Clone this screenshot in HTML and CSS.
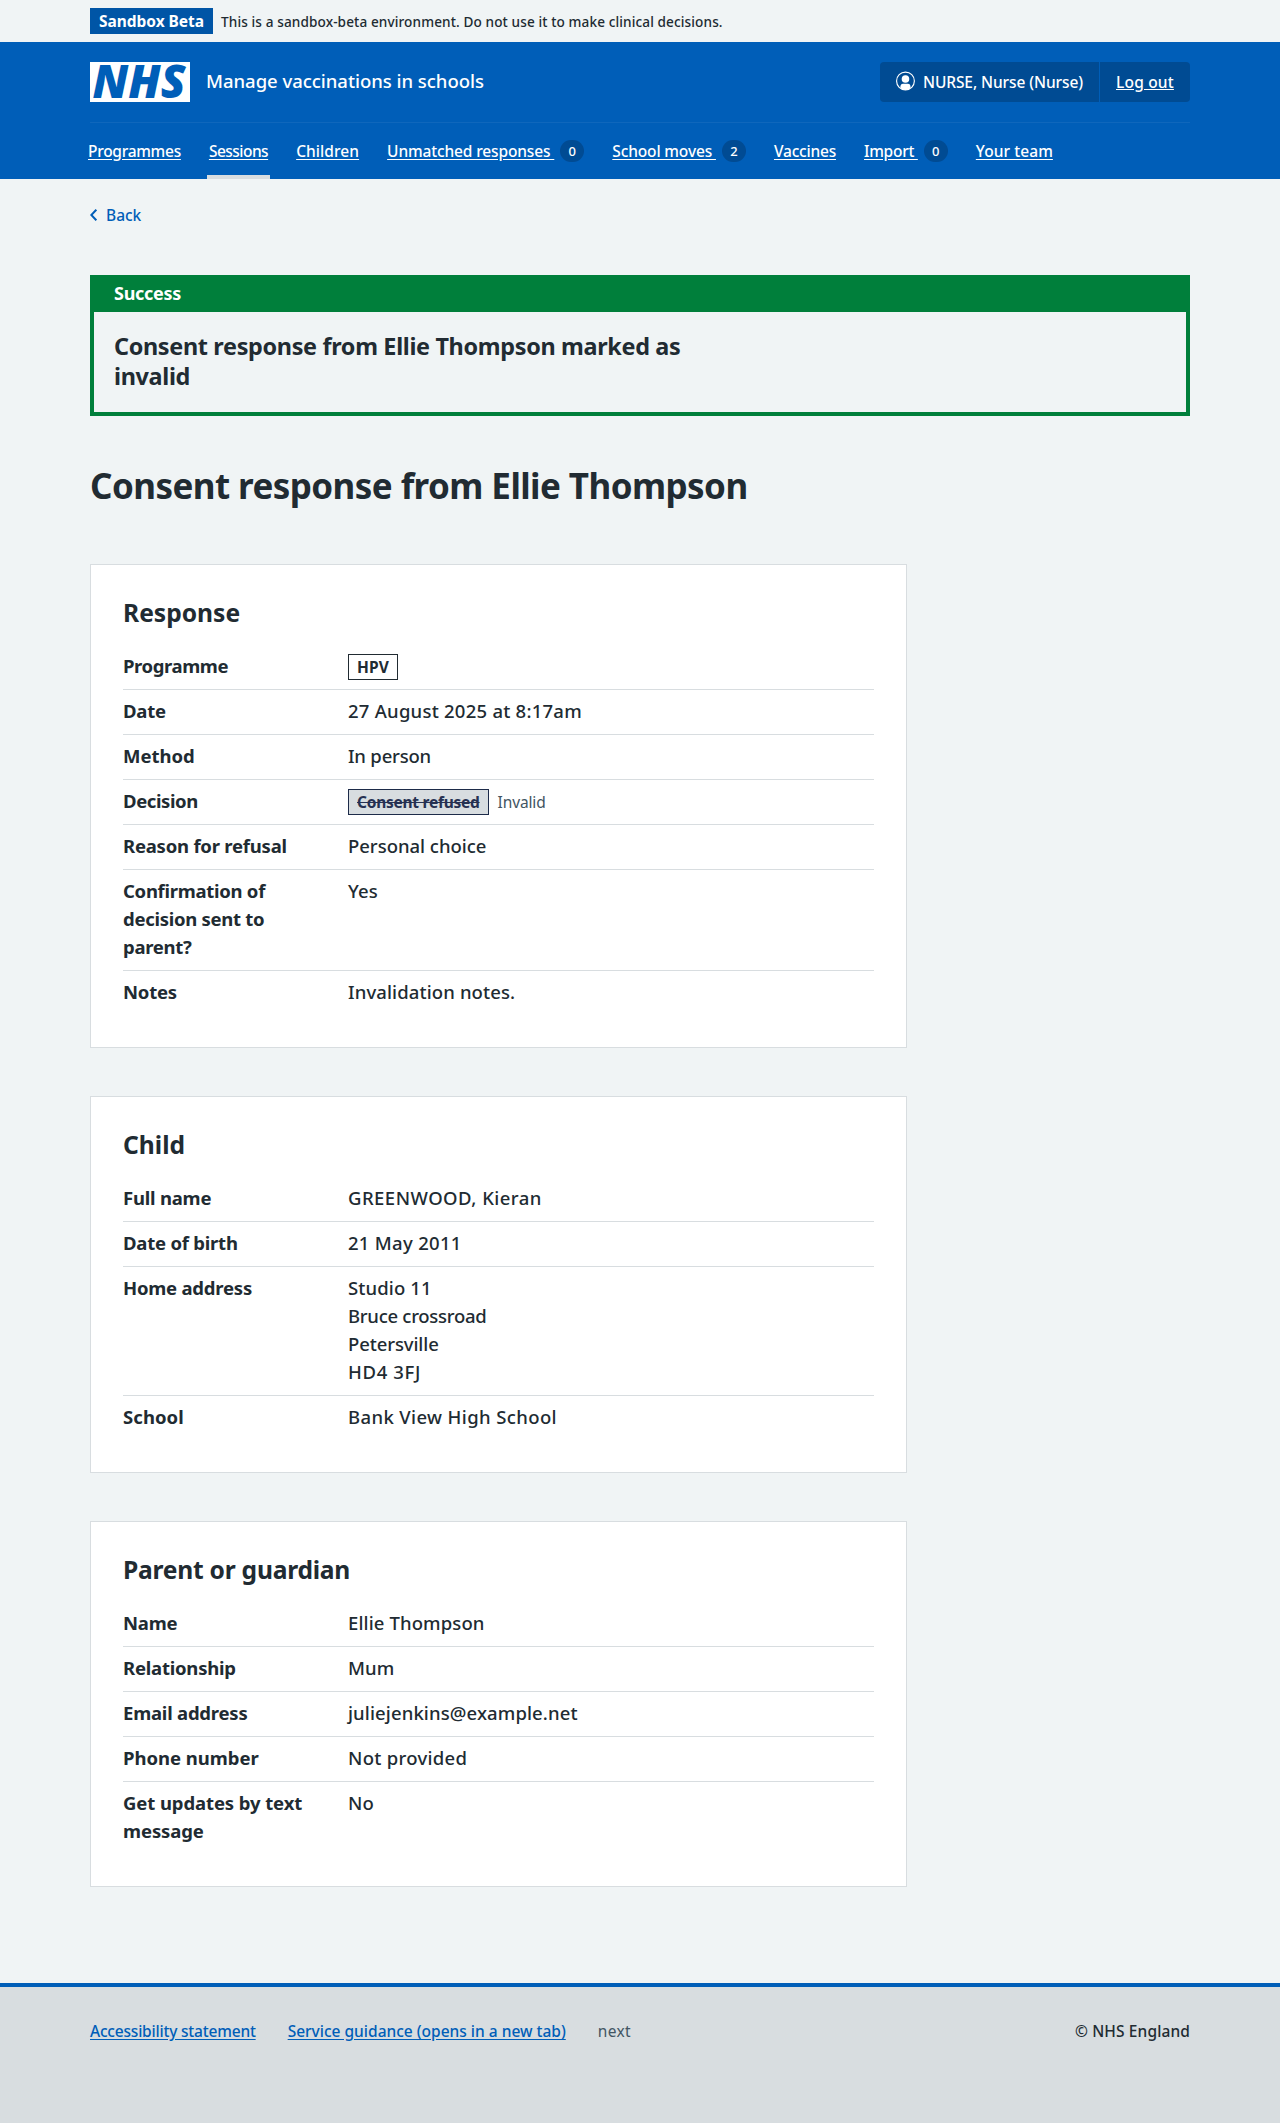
FILE: index.html
```html
<!DOCTYPE html>
<html lang="en">
<head>
<meta charset="utf-8">
<title>Consent response from Ellie Thompson – Manage vaccinations in schools</title>
<link rel="stylesheet" href="styles.css">
</head>
<body>
<div class="env-banner">
  <div class="container env-banner__inner">
    <strong class="env-banner__tag">Sandbox Beta</strong>
    <span class="env-banner__text">This is a sandbox-beta environment. Do not use it to make clinical decisions.</span>
  </div>
</div>

<header class="header">
  <div class="container">
    <div class="header__top">
      <a class="header__brand" href="#">
        <svg class="header__logo" width="100" height="40" viewBox="0 0 100 40" role="img" aria-label="NHS">
          <rect width="100" height="40" fill="#fff"/>
          <text class="header__logo-text" x="2.5" y="36" textLength="93" lengthAdjust="spacingAndGlyphs">NHS</text>
        </svg>
        <span class="header__service">Manage vaccinations in schools</span>
      </a>
      <div class="account">
        <div class="account__item account__user">
          <svg width="20" height="20" viewBox="0 0 20 20" aria-hidden="true">
            <clipPath id="avatar"><circle cx="10" cy="10" r="9.4"/></clipPath>
            <circle cx="10" cy="10" r="9.4" fill="none" stroke="#fff" stroke-width="1.2"/>
            <circle cx="10" cy="7.8" r="4" fill="#fff"/>
            <path clip-path="url(#avatar)" fill="#fff" d="M4.7 20v-4.2c0-1.9 1-3 2.7-3h5.2c1.700 0 2.700 1.100 2.700 3V20z"/>
          </svg>
          <span class="account__name">NURSE, Nurse (Nurse)</span>
        </div>
        <div class="account__item account__logout"><a href="#">Log out</a></div>
      </div>
    </div>
    <nav class="nav">
      <a class="nav__link track-m3" href="#">Programmes</a>
      <a class="nav__link nav__link--current" href="#">Sessions</a>
      <a class="nav__link track-1" href="#">Children</a>
      <div class="nav__group"><a class="nav__link nav__link--counted" href="#">Unmatched responses </a><span class="nav__count">0</span></div>
      <div class="nav__group"><a class="nav__link nav__link--counted" href="#">School moves </a><span class="nav__count">2</span></div>
      <a class="nav__link track-m2" href="#">Vaccines</a>
      <div class="nav__group"><a class="nav__link nav__link--counted track-m3" href="#">Import </a><span class="nav__count">0</span></div>
      <a class="nav__link track-1" href="#">Your team</a>
    </nav>
  </div>
</header>

<main class="container main">
  <a class="back" href="#">
    <svg width="7" height="12" viewBox="0 0 7 12" aria-hidden="true"><path d="M6.300 .7 1.300 6 6.300 11.300" fill="none" stroke="#005eb8" stroke-width="2"/></svg>
    <span>Back</span>
  </a>

  <section class="notice">
    <h2 class="notice__title">Success</h2>
    <p class="notice__text">Consent response from Ellie Thompson marked as invalid</p>
  </section>

  <h1 class="page-title">Consent response from Ellie Thompson</h1>

  <section class="card">
    <h2 class="card__title">Response</h2>
    <dl class="summary">
      <div class="summary__row"><dt class="track-m4">Programme</dt><dd><strong class="tag tag--outline">HPV</strong></dd></div>
      <div class="summary__row"><dt>Date</dt><dd class="track-2">27 August 2025 at 8:17am</dd></div>
      <div class="summary__row"><dt class="track-0">Method</dt><dd class="track-m2">In person</dd></div>
      <div class="summary__row"><dt class="track-m4">Decision</dt><dd><strong class="tag tag--grey"><s>Consent refused</s></strong><span class="status">Invalid</span></dd></div>
      <div class="summary__row"><dt>Reason for refusal</dt><dd class="track-0">Personal choice</dd></div>
      <div class="summary__row"><dt class="track-m3">Confirmation of decision sent to parent?</dt><dd>Yes</dd></div>
      <div class="summary__row"><dt>Notes</dt><dd>Invalidation notes.</dd></div>
    </dl>
  </section>

  <section class="card">
    <h2 class="card__title">Child</h2>
    <dl class="summary">
      <div class="summary__row"><dt>Full name</dt><dd class="track-5">GREENWOOD, Kieran</dd></div>
      <div class="summary__row"><dt>Date of birth</dt><dd class="track-3">21 May 2011</dd></div>
      <div class="summary__row"><dt>Home address</dt><dd>
        <span>Studio 11</span>
        <span class="track-m3">Bruce crossroad</span>
        <span class="track-m1">Petersville</span>
        <span class="track-6">HD4 3FJ</span>
      </dd></div>
      <div class="summary__row"><dt class="track-1">School</dt><dd class="track-4">Bank View High School</dd></div>
    </dl>
  </section>

  <section class="card">
    <h2 class="card__title card__title--long">Parent or guardian</h2>
    <dl class="summary">
      <div class="summary__row"><dt>Name</dt><dd>Ellie Thompson</dd></div>
      <div class="summary__row"><dt>Relationship</dt><dd>Mum</dd></div>
      <div class="summary__row"><dt>Email address</dt><dd>juliejenkins@example.net</dd></div>
      <div class="summary__row"><dt class="track-0">Phone number</dt><dd class="track-3">Not provided</dd></div>
      <div class="summary__row"><dt class="track-m1">Get updates by text message</dt><dd>No</dd></div>
    </dl>
  </section>
</main>

<footer class="footer">
  <div class="container footer__inner">
    <ul class="footer__links">
      <li><a class="track-m2" href="#">Accessibility statement</a></li>
      <li><a href="#">Service guidance (opens in a new tab)</a></li>
      <li class="footer__version">next</li>
    </ul>
    <p class="footer__copyright">© NHS England</p>
  </div>
</footer>
</body>
</html>
```
FILE: styles.css
```css
* { box-sizing: border-box; }

body {
  margin: 0;
  min-height: 2123px;
  display: flex;
  flex-direction: column;
  background: #f0f4f5;
  color: #212b32;
  font: 500 18.5px/28px "Noto Sans", "Open Sans", sans-serif;
}

h1, h2, p, ul, dl, dd { margin: 0; padding: 0; }
ul { list-style: none; }

.container { width: 1100px; margin: 0 auto; }

/* Environment banner */
.env-banner { height: 42px; }
.env-banner__inner { display: flex; align-items: center; height: 42px; gap: 8px; }
.env-banner__tag {
  width: 123px;
  height: 26px;
  padding-left: 9px;
  background: #0055a6;
  color: #fff;
  font-size: 15.5px;
  font-weight: 700;
  line-height: 26px;
  letter-spacing: -.04px;
}
.env-banner__text { font-size: 13.6px; letter-spacing: .11px; line-height: 27px; }

/* Header */
.header { height: 137px; background: #005eb8; color: #fff; }
.header a { color: #fff; }
.header__top {
  display: flex;
  justify-content: space-between;
  height: 81px;
  padding-top: 20px;
  border-bottom: 1px solid #0f67bc;
}
.header__brand { display: flex; gap: 16px; height: 40px; text-decoration: none; }
.header__logo { overflow: visible; }
.header__logo-text { font: italic 900 46px "Noto Sans", sans-serif; fill: #005eb8; }
.header__service { line-height: 38px; letter-spacing: -.03px; }

.account {
  display: flex;
  height: 40px;
  background: #004b93;
  border-radius: 4px;
  font-size: 15.5px;
  line-height: 40px;
}
.account__item { display: flex; padding: 0 16px; }
.account__user { width: 220px; gap: 8px; align-items: center; border-right: 1px solid #005eb8; }
.account__user svg { margin-bottom: 2px; }
.account__name { white-space: nowrap; letter-spacing: -.09px; }
.account__logout { width: 90px; letter-spacing: .2px; }

.nav { display: flex; gap: 28px; height: 56px; margin-left: -2px; font-size: 15.5px; line-height: 24px; }
.nav__link, .nav__group { padding-top: 16px; white-space: nowrap; }
.nav__group { display: flex; gap: 6px; }
.nav__link { text-underline-offset: 2px; }
.nav__link--counted { padding-top: 0; white-space: pre; letter-spacing: -.14px; }
.nav__link--current { border-bottom: 4px solid #d8dde0; padding-left: 2px; padding-right: 2px; margin: 0 -2px; letter-spacing: -.52px; }
.nav__count {
  width: 24px;
  height: 22px;
  margin-top: 1px;
  background: #004b93;
  border-radius: 11px;
  font-size: 13px;
  line-height: 23px;
  text-align: center;
}

/* Main */
.main { flex: 1; padding-top: 24px; }
.back {
  display: flex;
  align-items: center;
  gap: 9px;
  width: max-content;
  height: 24px;
  color: #005eb8;
  font-size: 15.5px;
  line-height: 24px;
  text-decoration: none;
}

.notice { height: 141px; margin-top: 48px; border: 4px solid #007f3b; border-top: 0; }
.notice__title {
  height: 37px;
  padding-left: 20px;
  background: #007f3b;
  color: #fff;
  font-size: 18px;
  font-weight: 700;
  line-height: 37px;
  letter-spacing: -.29px;
}
.notice__text {
  width: 640px;
  padding: 19px 20px 0;
  font-size: 23.400px;
  font-weight: 700;
  line-height: 30px;
  letter-spacing: -.33px;
}

.page-title {
  margin: 48px 0 56px;
  font-size: 35px;
  font-weight: 700;
  line-height: 44px;
  letter-spacing: -.57px;
}

/* Cards */
.card {
  width: 817px;
  margin-bottom: 48px;
  padding: 32px;
  background: #fff;
  border: 1px solid #d8dde0;
}
.card__title {
  height: 48px;
  font-size: 24.6px;
  font-weight: 700;
  line-height: 31px;
}
.card__title--long { letter-spacing: -.24px; }
.summary__row { display: flex; padding: 7px 0 9px; border-bottom: 1px solid #d8dde0; }
.summary__row:last-child { border-bottom: 0; }
.summary dt { width: 185px; margin-right: 40px; font-weight: 700; letter-spacing: -.22px; }
.summary dd { letter-spacing: .12px; }
.summary dd span { display: block; }

.tag {
  display: inline-block;
  height: 26px;
  margin-top: 2px;
  padding: 0 8px;
  border: 1px solid #212b32;
  font-size: 15.5px;
  font-weight: 700;
  line-height: 24px;
  letter-spacing: .15px;
  vertical-align: top;
}
.tag--grey { background: #d8dde0; border-color: #1d2b49; color: #263152; letter-spacing: -.25px; }
.summary dd .status {
  display: inline-block;
  margin: 2px 0 0 9px;
  color: #425563;
  font-size: 15.5px;
  font-weight: 400;
  line-height: 26px;
  letter-spacing: -.13px;
  vertical-align: top;
}

/* Letter-spacing steps */
.summary .track-m4, .track-m4 { letter-spacing: -.4px; }
.summary .track-m3, .track-m3 { letter-spacing: -.28px; }
.summary .track-m2, .track-m2 { letter-spacing: -.2px; }
.summary .track-m1, .track-m1 { letter-spacing: -.1px; }
.summary .track-0 { letter-spacing: -.02px; }
.summary .track-1, .track-1 { letter-spacing: .07px; }
.summary .track-2 { letter-spacing: .24px; }
.summary .track-3 { letter-spacing: .29px; }
.summary .track-4 { letter-spacing: .38px; }
.summary .track-5 { letter-spacing: .47px; }
.summary .track-6 { letter-spacing: .65px; }

/* Footer */
.footer { height: 140px; background: #d8dde0; border-top: 4px solid #005eb8; font-size: 15.5px; line-height: 24px; }
.footer__inner { display: flex; justify-content: space-between; padding-top: 32px; }
.footer__links { display: flex; gap: 32px; }
.footer a { color: #005eb8; text-underline-offset: 2px; }
.footer__version { color: #425563; font-weight: 400; letter-spacing: .3px; }
.footer__copyright { letter-spacing: .12px; }
```
